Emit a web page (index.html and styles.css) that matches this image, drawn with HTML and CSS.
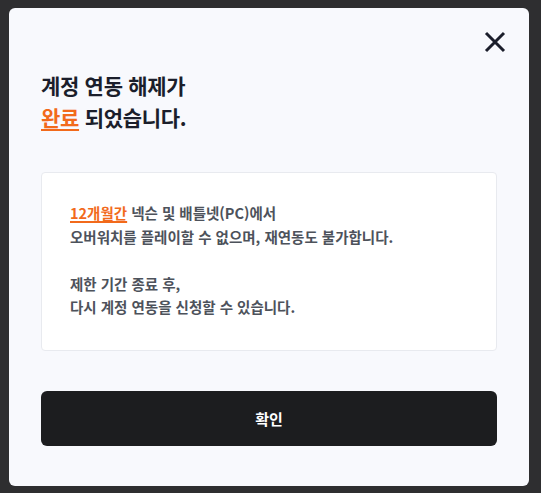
FILE: index.html
```html
<!DOCTYPE html>
<html lang="ko">
<head>
  <meta charset="UTF-8">
  <meta name="viewport" content="width=device-width, initial-scale=1.0">
  <title>계정 연동 해제</title>
  <link rel="stylesheet" href="styles.css">
</head>
<body>
<div id="backdrop">
  <div id="modal">
    <div class="top">
      <button class="close" aria-label="닫기">
        <svg width="22" height="22" viewBox="0 0 22 22">
          <path d="M2 2 L20 20 M20 2 L2 20" stroke="#1b1e2b" stroke-width="3" fill="none"/>
        </svg>
      </button>
    </div>
    <h1 class="title">계정 연동 해제가<br><span class="hl">완료</span> 되었습니다.</h1>
    <div class="info">
      <span class="hl">12개월간</span> 넥슨 및 배틀넷(PC)에서<br>
      오버워치를 플레이할 수 없으며, 재연동도 불가합니다.<br>
      <br>
      제한 기간 종료 후,<br>
      다시 계정 연동을 신청할 수 있습니다.
    </div>
    <button class="ok">확인</button>
  </div>
</div>
</body>
</html>
```

FILE: styles.css
```css
body {
  margin: 0;
  font-family: "Noto Sans CJK KR", "Noto Sans", sans-serif;
  background: #2e2e30;
}
#backdrop {
  height: 493px;
  padding: 8px 12px 0 9px;
  box-sizing: border-box;
}
#modal {
  width: 520px;
  box-sizing: border-box;
  background: #f8f9fd;
  border-radius: 6px;
  padding: 23px 32px 40px 32px;
}
.top {
  display: flex;
  justify-content: flex-end;
  margin-right: -9px;
}
.close {
  border: 0;
  padding: 0;
  background: none;
  width: 22px;
  height: 22px;
  display: block;
}
.close svg {
  display: block;
}
.title {
  margin: 16px 0 0 0;
  font-size: 21px;
  line-height: 32px;
  font-weight: 700;
  color: #1b1e2b;
  letter-spacing: -0.3px;
}
.hl {
  color: #f26a1b;
  text-decoration: underline;
  text-underline-offset: 3px;
  text-decoration-thickness: 2px;
}
.info {
  margin-top: 39px;
  background: #fff;
  border: 1px solid #e8eaef;
  border-radius: 4px;
  padding: 28px 28px 31px 28px;
  font-size: 14.5px;
  line-height: 23.5px;
  font-weight: 700;
  color: #4d525b;
}
.info .hl {
  text-decoration-thickness: 1.5px;
  text-underline-offset: 2px;
}
.ok {
  display: block;
  width: 100%;
  height: 55px;
  margin-top: 40px;
  border: 0;
  border-radius: 6px;
  background: #1c1d1f;
  color: #fff;
  font-family: inherit;
  font-size: 15px;
  font-weight: 700;
}
```
